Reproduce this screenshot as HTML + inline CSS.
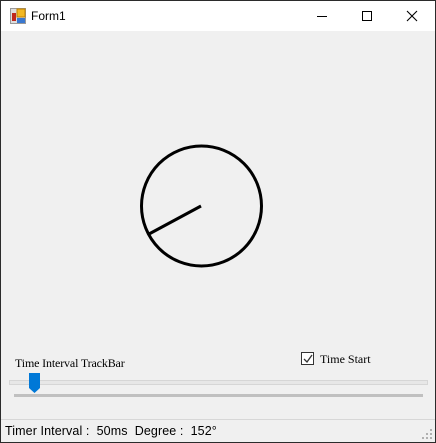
<!DOCTYPE html>
<html><head><style>
body{margin:0;width:436px;height:443px;overflow:hidden;background:#2b2b2b;font-family:"Liberation Sans",sans-serif;position:relative}
.win{position:absolute;left:1px;top:1px;width:434px;height:441px;background:#f0f0f0}
.title{position:absolute;left:0;top:0;width:434px;height:30px;background:#fff}
.abs{position:absolute}
.serif{font-family:"Liberation Serif",serif;font-size:12px;color:#000}
</style></head><body>
<div class="win">
<div class="title">
<svg class="abs" style="left:9px;top:7px" width="16" height="16"><rect x="0.5" y="0.5" width="15" height="15" fill="#ddd" stroke="#999"/><rect x="7" y="1" width="8" height="8" fill="#f2b824" stroke="#c08000"/><rect x="2" y="5" width="4" height="8" fill="#c0281c"/><rect x="7" y="10" width="8" height="5" fill="#3a78d0"/></svg>
<div class="abs" style="left:30px;top:8px;font-size:12px;color:#000">Form1</div>
<div class="abs" style="left:316px;top:15px;width:10px;height:1px;background:#000"></div>
<div class="abs" style="left:361px;top:10px;width:8px;height:8px;border:1px solid #000"></div>
<svg class="abs" style="left:405px;top:9px" width="12" height="12"><path d="M1 1L11 11M11 1L1 11" stroke="#000" stroke-width="1.1"/></svg>
</div>
<svg class="abs" style="left:-1px;top:-1px" width="436" height="443">
<circle cx="201.5" cy="206" r="60" fill="none" stroke="#000" stroke-width="3"/>
<line x1="201" y1="206" x2="149" y2="234" stroke="#000" stroke-width="3"/>
</svg>
<div class="abs serif" style="left:14px;top:355px;letter-spacing:-0.15px">Time Interval TrackBar</div>
<div class="abs" style="left:300px;top:351px;width:11px;height:11px;border:1px solid #333;background:#fff"></div>
<svg class="abs" style="left:301px;top:352px" width="12" height="12"><path d="M2 6L5 9L10 2" fill="none" stroke="#333" stroke-width="1.3"/></svg>
<div class="abs serif" style="left:319px;top:351px">Time Start</div>
<div class="abs" style="left:8px;top:379px;width:417px;height:3px;border:1px solid #d6d6d6;background:#e7e7e7"></div>
<div class="abs" style="left:13px;top:393px;width:409px;height:3px;background:#c0c0c0"></div>
<svg class="abs" style="left:28px;top:372px" width="12" height="21"><path d="M0 0H11V15L5.5 20L0 15Z" fill="#0078d7"/></svg>
<div class="abs" style="left:0;top:418px;width:434px;height:1px;background:#d7d7d7"></div>
<div class="abs" style="left:4px;top:423px;font-size:12.5px;letter-spacing:0.1px;color:#000;white-space:pre">Timer Interval :  50ms  Degree :  152°</div>
<svg class="abs" style="left:421px;top:428px" width="12" height="12" fill="#b0b0b0"><rect x="8" y="0" width="2" height="2"/><rect x="4" y="4" width="2" height="2"/><rect x="8" y="4" width="2" height="2"/><rect x="0" y="8" width="2" height="2"/><rect x="4" y="8" width="2" height="2"/><rect x="8" y="8" width="2" height="2"/></svg>
</div>
</body></html>
